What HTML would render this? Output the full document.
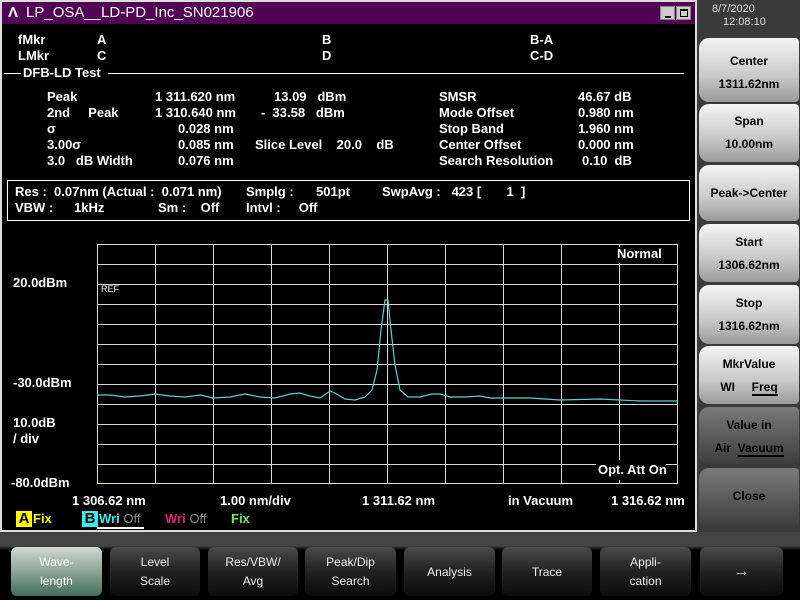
<!DOCTYPE html>
<html><head><meta charset="utf-8"><style>
*{margin:0;padding:0;box-sizing:border-box}
body{width:800px;height:600px;background:#3a3a3a;position:relative;overflow:hidden;font-family:"Liberation Sans",sans-serif;font-weight:bold;font-size:13px;color:#fff}
.a{position:absolute;white-space:pre}
#win{position:absolute;left:0;top:0;width:697px;height:532px;background:#000;border:2px solid #ddd}
#title{position:absolute;left:0;top:0;width:693px;height:22px;background:#520055;font-weight:normal;font-size:15px;line-height:22px}
.rb{position:absolute;left:699px;width:100px;border-radius:10px 4px 4px 10px;background:linear-gradient(#f4f4f4,#c8c8c8 60%,#9a9a9a);color:#000;text-align:center;font-size:12px}
.rb.d{background:linear-gradient(#7a7a7a,#555 60%,#3c3c3c)}
.tab{position:absolute;top:547px;height:49px;border-radius:6px;background:linear-gradient(#4a4a4a,#222 50%,#0c0c0c);color:#eee;text-align:center;font-size:12px;line-height:19px;padding-top:6px;font-weight:normal}
</style></head><body>
<div class="a" style="left:0;top:532px;width:800px;height:68px;background:linear-gradient(#444 0,#444 14px,#000 18px)"></div>
<div id="win">
<div id="title"><span class="a" style="left:6px;top:0;font-weight:bold">&#923;</span><span class="a" style="left:24px;top:0">LP_OSA__LD-PD_Inc_SN021906</span>
<div class="a" style="left:658px;top:4px;width:15px;height:14px;background:#ccc;border:1px solid #888"><div style="position:absolute;left:4px;top:9px;width:6px;height:2px;background:#000"></div></div>
<div class="a" style="left:674px;top:4px;width:15px;height:14px;background:#ccc;border:1px solid #888"><div style="position:absolute;left:3px;top:2px;width:8px;height:8px;border:1px solid #000;border-top-width:2px"></div></div>
</div>
</div>
<div class="a" style="left:18px;top:32px">fMkr</div><div class="a" style="left:97px;top:32px">A</div><div class="a" style="left:322px;top:32px">B</div><div class="a" style="left:530px;top:32px">B-A</div>
<div class="a" style="left:18px;top:48px">LMkr</div><div class="a" style="left:97px;top:48px">C</div><div class="a" style="left:322px;top:48px">D</div><div class="a" style="left:530px;top:48px">C-D</div>
<div class="a" style="left:4px;top:73px;width:17px;height:1px;background:#fff"></div>
<div class="a" style="left:23px;top:65px">DFB-LD Test</div>
<div class="a" style="left:108px;top:73px;width:576px;height:1px;background:#fff"></div>
<div class="a" style="left:47px;top:89px">Peak</div><div class="a" style="left:155px;top:89px">1 311.620 nm</div><div class="a" style="left:274px;top:89px">13.09   dBm</div>
<div class="a" style="left:47px;top:105px">2nd     Peak</div><div class="a" style="left:155px;top:105px">1 310.640 nm</div><div class="a" style="left:261px;top:105px">-  33.58   dBm</div>
<div class="a" style="left:47px;top:121px">&#963;</div><div class="a" style="left:178px;top:121px">0.028 nm</div>
<div class="a" style="left:47px;top:137px">3.00&#963;</div><div class="a" style="left:178px;top:137px">0.085 nm</div><div class="a" style="left:255px;top:137px">Slice Level    20.0    dB</div>
<div class="a" style="left:47px;top:153px">3.0   dB Width</div><div class="a" style="left:178px;top:153px">0.076 nm</div>
<div class="a" style="left:439px;top:89px">SMSR</div><div class="a" style="left:578px;top:89px">46.67 dB</div>
<div class="a" style="left:439px;top:105px">Mode Offset</div><div class="a" style="left:578px;top:105px">0.980 nm</div>
<div class="a" style="left:439px;top:121px">Stop Band</div><div class="a" style="left:578px;top:121px">1.960 nm</div>
<div class="a" style="left:439px;top:137px">Center Offset</div><div class="a" style="left:578px;top:137px">0.000 nm</div>
<div class="a" style="left:439px;top:153px">Search Resolution</div><div class="a" style="left:582px;top:153px">0.10  dB</div>
<div class="a" style="left:7px;top:180px;width:683px;height:41px;border:1px solid #fff"></div>
<div class="a" style="left:15px;top:184px">Res :  0.07nm (Actual :  0.071 nm)</div><div class="a" style="left:246px;top:184px">Smplg :</div><div class="a" style="left:316px;top:184px">501pt</div><div class="a" style="left:382px;top:184px">SwpAvg :   423 [       1  ]</div>
<div class="a" style="left:15px;top:200px">VBW :</div><div class="a" style="left:74px;top:200px">1kHz</div><div class="a" style="left:158px;top:200px">Sm :    Off</div><div class="a" style="left:246px;top:200px">Intvl :     Off</div>
<div class="a" style="left:13px;top:275px">20.0dBm</div>
<div class="a" style="left:13px;top:375px">-30.0dBm</div>
<div class="a" style="left:13px;top:415px">10.0dB</div>
<div class="a" style="left:13px;top:431px">/ div</div>
<div class="a" style="left:11px;top:475px">-80.0dBm</div>
<svg class="a" style="left:0;top:0" width="697" height="532">
<g stroke="#d8d8d8" stroke-width="1" fill="none" shape-rendering="crispEdges">
<rect x="97.5" y="244.5" width="580" height="239"/>
<path d="M155.5 244V484M213.5 244V484M271.5 244V484M329.5 244V484M387.5 244V484M445.5 244V484M503.5 244V484M561.5 244V484M619.5 244V484
M97 264.5H677M97 284.5H677M97 304.5H677M97 324.5H677M97 344.5H677M97 364.5H677M97 384.5H677M97 404.5H677M97 424.5H677M97 444.5H677M97 464.5H677"/>
</g>
<line x1="97" y1="483.5" x2="678" y2="483.5" stroke="#e8e890"/>
<rect x="612" y="247" width="62" height="16" fill="#000"/>
<rect x="596" y="460" width="70" height="20" fill="#000"/>
<polyline fill="none" stroke="#5fd0d0" stroke-width="1.2" points="97,395 110,395 125,397 140,396 155,394 170,396 185,397 200,395 213,398 230,397 245,394 260,397 275,398 290,394 300,393 310,396 320,398 330,391 335,393 345,399 355,400 365,397 372,390 377,370 381,330 385,300 388,300 391,330 395,365 400,390 408,397 420,397 432,394 440,394 450,397 465,397 480,396 490,398 530,398 560,400 600,399 640,401 677,401"/>
</svg>
<div class="a" style="left:101px;top:284px;font-size:9px;font-weight:normal">REF</div>
<div class="a" style="left:617px;top:246px">Normal</div>
<div class="a" style="left:598px;top:462px">Opt. Att On</div>
<div class="a" style="left:72px;top:493px">1 306.62 nm</div><div class="a" style="left:220px;top:493px">1.00 nm/div</div><div class="a" style="left:362px;top:493px">1 311.62 nm</div><div class="a" style="left:508px;top:493px">in Vacuum</div><div class="a" style="left:611px;top:493px">1 316.62 nm</div>
<div class="a" style="left:16px;top:511px;width:16px;height:16px;background:#ff0;color:#000;font-size:15px;line-height:16px;text-align:center">A</div><div class="a" style="left:33px;top:511px;color:#ff0">Fix</div>
<div class="a" style="left:82px;top:511px;width:16px;height:16px;background:#3ee;color:#000;font-size:15px;line-height:16px;text-align:center">B</div><div class="a" style="left:99px;top:511px;color:#3ee">Wri <span style="color:#888;font-weight:normal">Off</span></div>
<div class="a" style="left:97px;top:527px;width:47px;height:2px;background:#fff"></div>
<div class="a" style="left:165px;top:511px;color:#e0207a">Wri <span style="color:#888;font-weight:normal">Off</span></div>
<div class="a" style="left:231px;top:511px;color:#6e6">Fix</div>
<div class="a" style="left:712px;top:3px;color:#ddd;font-weight:normal;font-size:11px">8/7/2020</div>
<div class="a" style="left:723px;top:16px;color:#ddd;font-weight:normal;font-size:11px">12:08:10</div>
<div class="rb" style="top:38px;height:64px;padding-top:12px;line-height:23px">Center<br>1311.62nm</div>
<div class="rb" style="top:104px;height:58px;padding-top:6px;line-height:23px">Span<br>10.00nm</div>
<div class="rb" style="top:165px;height:56px;line-height:56px">Peak-&gt;Center</div>
<div class="rb" style="top:224px;height:58px;padding-top:7px;line-height:23px">Start<br>1306.62nm</div>
<div class="rb" style="top:285px;height:59px;padding-top:7px;line-height:23px">Stop<br>1316.62nm</div>
<div class="rb" style="top:346px;height:58px;padding-top:7px;line-height:23px">MkrValue<br>WI &nbsp;&nbsp;&nbsp;&nbsp;<span style="border-bottom:2px solid #000">Freq</span></div>
<div class="rb d" style="top:407px;height:58px;padding-top:7px;line-height:23px">Value in<br>Air &nbsp;<span style="border-bottom:2px solid #000">Vacuum</span></div>
<div class="rb d" style="top:468px;height:60px;line-height:56px">Close</div>
<div class="tab" style="left:11px;width:91px;background:linear-gradient(#cfd8d2,#8ea596 50%,#3d6e58);color:#fff">Wave-<br>length</div>
<div class="tab" style="left:110px;width:90px">Level<br>Scale</div>
<div class="tab" style="left:208px;width:90px">Res/VBW/<br>Avg</div>
<div class="tab" style="left:305px;width:91px">Peak/Dip<br>Search</div>
<div class="tab" style="left:404px;width:91px;line-height:38px">Analysis</div>
<div class="tab" style="left:502px;width:90px;line-height:38px">Trace</div>
<div class="tab" style="left:600px;width:91px">Appli-<br>cation</div>
<div class="tab" style="left:700px;width:83px;line-height:38px;font-size:16px">&#8594;</div>
</body></html>
